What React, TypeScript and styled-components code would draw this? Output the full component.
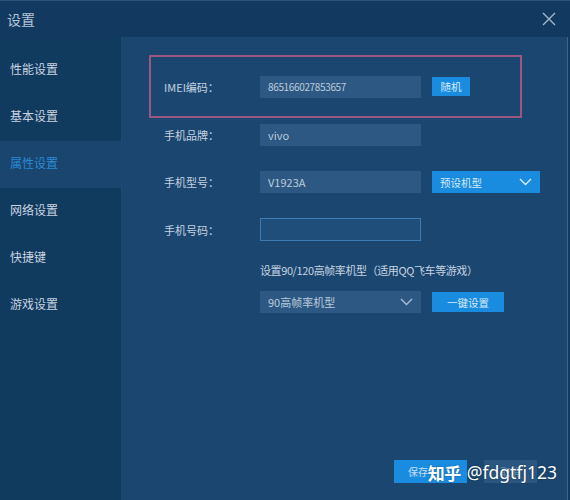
import React from "react";
import styled, { createGlobalStyle } from "styled-components";

const GlobalStyle = createGlobalStyle`
  html, body {
    margin: 0;
    padding: 0;
    background: #12395f;
  }
  * { box-sizing: border-box; }
`;

const FONT = `"Noto Sans CJK SC", "Noto Sans", "Microsoft YaHei", sans-serif`;

const Window = styled.div`
  width: 570px;
  height: 500px;
  display: flex;
  flex-direction: column;
  background: #12395f;
  border-top: 1px solid #2e5579;
  font-family: ${FONT};
  overflow: hidden;
  position: relative;
`;

const TitleBar = styled.div`
  height: 36px;
  flex: none;
  display: flex;
  align-items: center;
  justify-content: space-between;
  padding: 0 14px 0 7px;
  color: #b4c6d9;
  font-size: 14px;
`;

const CloseButton = styled.div`
  width: 14px;
  height: 14px;
  display: flex;
  align-items: center;
  justify-content: center;
`;

const Body = styled.div`
  flex: 1;
  display: flex;
  min-height: 0;
`;

const Sidebar = styled.nav`
  width: 122px;
  flex: none;
  display: flex;
  flex-direction: column;
  padding-top: 10px;
  background: #113a5f;
  border-right: 1px solid #1c4a73;
`;

const NavItem = styled.div<{ $active?: boolean }>`
  height: 47px;
  display: flex;
  align-items: center;
  padding: 0 0 4px 10px;
  font-size: 12px;
  color: ${(p) => (p.$active ? "#2b8ad4" : "#c9d4e0")};
  background: ${(p) => (p.$active ? "#19456e" : "transparent")};
`;

const Panel = styled.main`
  flex: 1;
  display: flex;
  flex-direction: column;
  background: #1a4670;
  padding: 18px 0 17px 27px;
  border-right: 1px solid #3a6690;
  margin-right: 2px;
`;

const Highlight = styled.div`
  width: 373px;
  height: 63px;
  border: 2px solid #9a5781;
  display: flex;
  align-items: center;
  padding-left: 13px;
  margin-bottom: 6px;
`;

const Row = styled.div<{ $gap?: number }>`
  display: flex;
  align-items: center;
  padding-left: 15px;
  margin-bottom: ${(p) => p.$gap ?? 25}px;
`;

const Label = styled.div`
  width: 96px;
  flex: none;
  font-size: 11px;
  color: #c6d3e0;
`;

const Field = styled.div<{ $outlined?: boolean }>`
  width: 161px;
  height: ${(p) => (p.$outlined ? 23 : 22)}px;
  flex: none;
  display: flex;
  align-items: center;
  justify-content: space-between;
  padding: 0 8px;
  font-size: 11px;
  color: #bccbdb;
  background: ${(p) => (p.$outlined ? "#1f4e7a" : "#2c5883")};
  border: ${(p) => (p.$outlined ? "1px solid #3c7bb3" : "none")};
`;

const Digits = styled.span`
  font-size: 10px;
  letter-spacing: -0.35px;
`;

const BlueButton = styled.div<{ $width: number; $height?: number }>`
  width: ${(p) => p.$width}px;
  height: ${(p) => p.$height ?? 20}px;
  margin-left: 11px;
  flex: none;
  display: flex;
  align-items: center;
  justify-content: center;
  background: #1a8ce0;
  color: #d6e9f8;
  font-size: 10.5px;
`;

const Dropdown = styled(BlueButton)`
  justify-content: space-between;
  padding: 0 8px 0 8px;
`;

const Hint = styled.div`
  padding-left: 111px;
  font-size: 11px;
  letter-spacing: -0.4px;
  color: #c6d3e0;
  margin-bottom: 13px;
`;

const Footer = styled.div`
  margin-top: auto;
  display: flex;
  justify-content: flex-end;
  gap: 17px;
  padding-right: 30px;
  position: relative;
`;

const FooterButton = styled.div<{ $primary?: boolean; $width: number }>`
  width: ${(p) => p.$width}px;
  height: 23px;
  display: flex;
  align-items: center;
  justify-content: ${(p) => (p.$primary ? "flex-start" : "center")};
  padding-left: ${(p) => (p.$primary ? "14px" : "0")};
  font-size: 10px;
  color: ${(p) => (p.$primary ? "#c4def3" : "#6f8dab")};
  background: ${(p) => (p.$primary ? "#1a8ce0" : "#2a5680")};
`;

const Watermark = styled.div`
  position: absolute;
  right: 10px;
  top: 50%;
  transform: translateY(-50%);
  display: flex;
  align-items: center;
  gap: 6px;
  color: #ffffff;
  pointer-events: none;
  text-shadow: 0 0 2px rgba(0, 0, 0, 0.35);
`;

const Brand = styled.span`
  font-size: 17px;
  font-weight: 700;
  letter-spacing: -0.5px;
`;

const Handle = styled.span`
  font-family: "Noto Sans", "DejaVu Sans", sans-serif;
  font-size: 17.5px;
`;

const Chevron = ({ color }: { color: string }) => (
  <svg width="13" height="8" viewBox="0 0 13 8">
    <polyline points="1,1 6.5,6.5 12,1" fill="none" stroke={color} strokeWidth="1.4" />
  </svg>
);

const navItems = ["性能设置", "基本设置", "属性设置", "网络设置", "快捷键", "游戏设置"];

export default function App() {
  return (
    <>
      <GlobalStyle />
      <Window>
        <TitleBar>
          <span>设置</span>
          <CloseButton>
            <svg width="14" height="14" viewBox="0 0 14 14">
              <path d="M1 1 L13 13 M13 1 L1 13" stroke="#a3b8cd" strokeWidth="1.4" />
            </svg>
          </CloseButton>
        </TitleBar>
        <Body>
          <Sidebar>
            {navItems.map((item) => (
              <NavItem key={item} $active={item === "属性设置"}>
                {item}
              </NavItem>
            ))}
          </Sidebar>
          <Panel>
            <Highlight>
              <Label>IMEI编码：</Label>
              <Field>
                <Digits>865166027853657</Digits>
              </Field>
              <BlueButton $width={38} $height={19}>随机</BlueButton>
            </Highlight>
            <Row>
              <Label>手机品牌：</Label>
              <Field>vivo</Field>
            </Row>
            <Row>
              <Label>手机型号：</Label>
              <Field>V1923A</Field>
              <Dropdown $width={108} $height={22}>
                <span>预设机型</span>
                <Chevron color="#dcecf8" />
              </Dropdown>
            </Row>
            <Row $gap={21}>
              <Label>手机号码：</Label>
              <Field $outlined />
            </Row>
            <Hint>设置90/120高帧率机型（适用QQ飞车等游戏）</Hint>
            <Row>
              <Label />
              <Field>
                <span>90高帧率机型</span>
                <Chevron color="#a9bed3" />
              </Field>
              <BlueButton $width={72}>一键设置</BlueButton>
            </Row>
            <Footer>
              <FooterButton $primary $width={73}>保存</FooterButton>
              <FooterButton $width={53}>取消</FooterButton>
              <Watermark>
                <Brand>知乎</Brand>
                <Handle>@fdgtfj123</Handle>
              </Watermark>
            </Footer>
          </Panel>
        </Body>
      </Window>
    </>
  );
}
